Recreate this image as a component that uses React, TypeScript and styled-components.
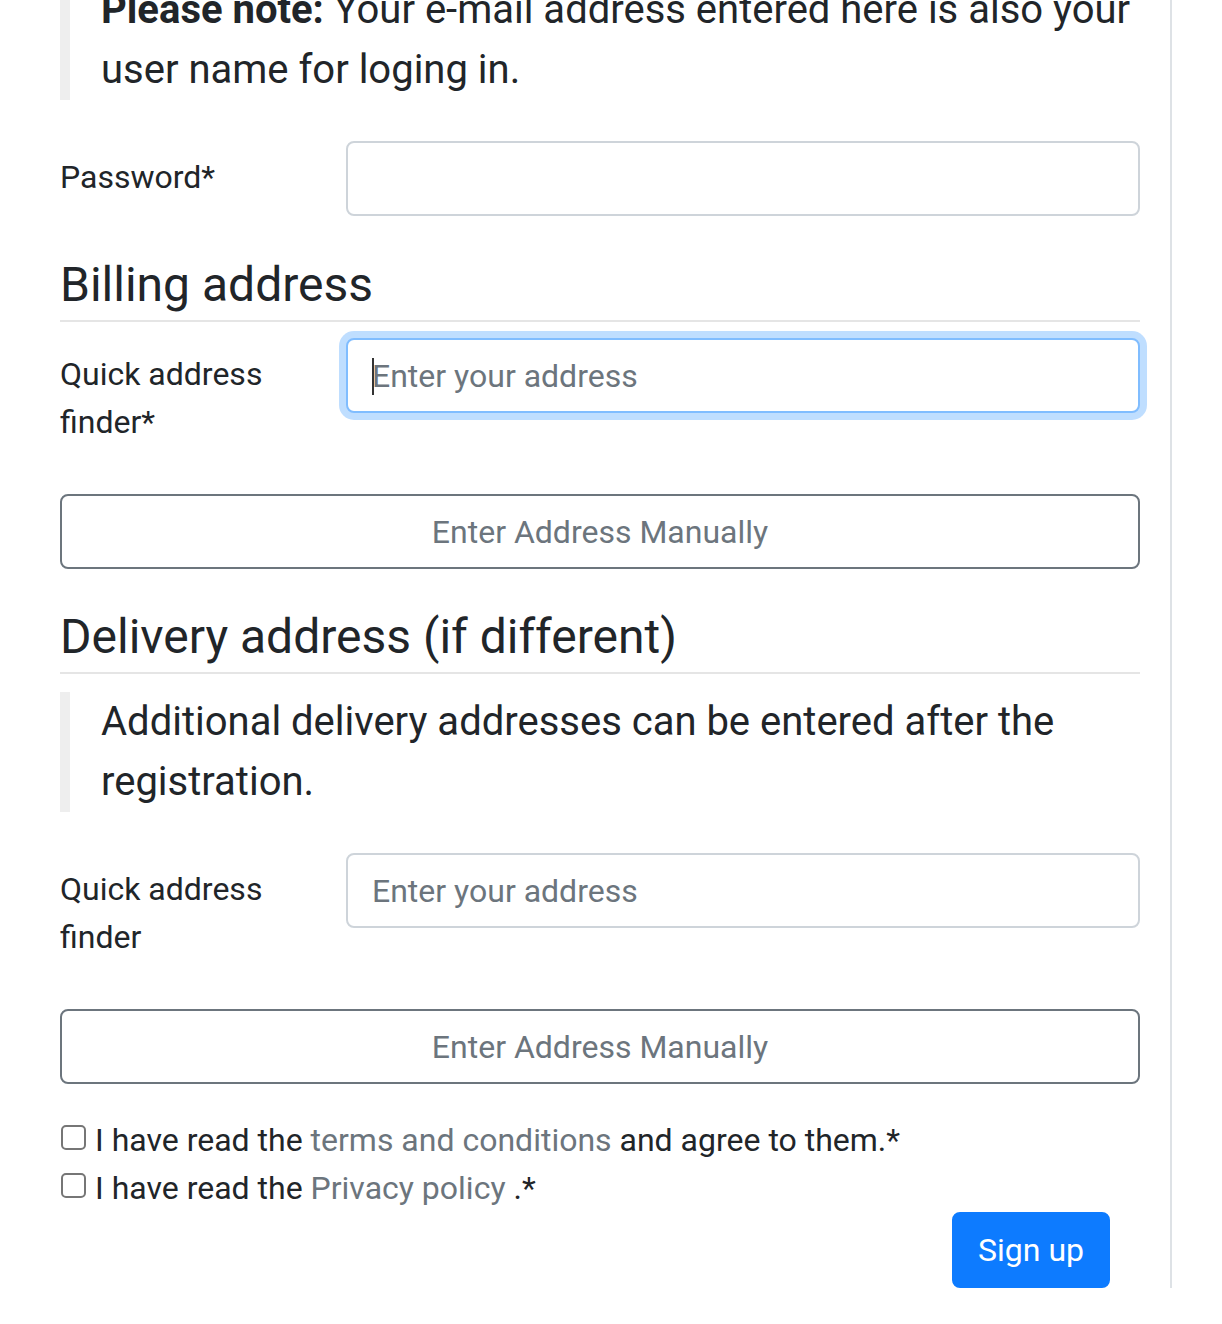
import React from "react";
import styled, { createGlobalStyle, css } from "styled-components";

const Global = createGlobalStyle`
  html, body { margin: 0; padding: 0; background: #fff; }
  body {
    font-family: Roboto, "Liberation Sans", Arial, sans-serif;
    color: #212529;
    font-size: 32px;
    line-height: 48px;
    overflow: hidden;
  }
  * { box-sizing: border-box; }
`;

const Panel = styled.div`
  margin: -20px 0 0 60px;
  width: 1112px;
  padding-right: 30px;
  border-right: 2px solid #dee2e6;
  display: flex;
  flex-direction: column;
`;

const Heading = styled.h4`
  margin: 7px 0 16px 0;
  padding-bottom: 6px;
  border-bottom: 2px solid #e5e5e5;
  font-size: 48px;
  line-height: 58px;
  font-weight: 400;
  color: #212529;
`;

const Note = styled.blockquote`
  margin: 0 0 41px 0;
  padding: 0 0 0 31px;
  border-left: 10px solid #eeeeee;
  font-size: 40px;
  line-height: 60px;
  color: #212529;
  strong { font-weight: 700; }
  ${Heading} + & { margin-top: 2px; }
`;

const Row = styled.div`
  display: grid;
  grid-template-columns: 286px 1fr;
  margin-bottom: 32px;
  align-items: start;
`;

const Label = styled.label`
  padding: 12px 0 16px;
  font-size: 32px;
  line-height: 48px;
  color: #212529;
`;

const Field = styled.div`
  position: relative;
`;

const Input = styled.input<{ $focused?: boolean }>`
  display: block;
  width: 100%;
  height: 75px;
  padding: 0 24px;
  font-family: Roboto, "Liberation Sans", Arial, sans-serif;
  font-size: 32px;
  color: #495057;
  background: #fff;
  border: 2px solid #ced4da;
  border-radius: 8px;
  outline: none;
  &::placeholder { color: #6c757d; opacity: 1; }
  ${(p) =>
    p.$focused &&
    css`
      border-color: #80bdff;
      box-shadow: 0 0 0 7px rgba(0, 123, 255, 0.25);
    `}
`;

const Caret = styled.span`
  position: absolute;
  left: 26px;
  top: 20px;
  width: 2px;
  height: 37px;
  background: #333;
`;

const OutlineButton = styled.button`
  display: block;
  width: 100%;
  height: 75px;
  margin-bottom: 32px;
  font-family: Roboto, "Liberation Sans", Arial, sans-serif;
  font-size: 32px;
  line-height: 48px;
  color: #6c757d;
  background: transparent;
  border: 2px solid #6c757d;
  border-radius: 8px;
  cursor: pointer;
`;

const CheckLine = styled.div`
  font-size: 32px;
  line-height: 48px;
  white-space: nowrap;
`;

const Check = styled.input`
  appearance: none;
  -webkit-appearance: none;
  display: inline-block;
  width: 25px;
  height: 25px;
  margin: 0 9px 0 1px;
  vertical-align: 1px;
  border: 2px solid #767676;
  border-radius: 5px;
  background: #fff;
`;

const Link = styled.a`
  color: #6c757d;
  text-decoration: none;
`;

const Actions = styled.div`
  display: flex;
  justify-content: flex-end;
  padding-right: 30px;
`;

const PrimaryButton = styled.button`
  height: 76px;
  padding: 0 24px;
  font-family: Roboto, "Liberation Sans", Arial, sans-serif;
  font-size: 32px;
  color: #fff;
  background: #0d7bff;
  border: 2px solid #0d7bff;
  border-radius: 8px;
  cursor: pointer;
`;

export default function App() {
  return (
    <>
      <Global />
      <Panel>
        <Note>
          <strong>Please note:</strong> Your e-mail address entered here is also your user name for loging in.
        </Note>

        <Row>
          <Label>Password*</Label>
          <Field>
            <Input type="password" />
          </Field>
        </Row>

        <Heading>Billing address</Heading>
        <Row>
          <Label>
            Quick address
            <br />
            finder*
          </Label>
          <Field>
            <Input $focused placeholder="Enter your address" />
            <Caret />
          </Field>
        </Row>
        <OutlineButton type="button">Enter Address Manually</OutlineButton>

        <Heading>Delivery address (if different)</Heading>
        <Note>Additional delivery addresses can be entered after the registration.</Note>
        <Row>
          <Label>
            Quick address
            <br />
            finder
          </Label>
          <Field>
            <Input placeholder="Enter your address" />
          </Field>
        </Row>
        <OutlineButton type="button">Enter Address Manually</OutlineButton>

        <CheckLine>
          <Check type="checkbox" />I have read the <Link href="#">terms and conditions</Link> and agree to them.*
        </CheckLine>
        <CheckLine>
          <Check type="checkbox" />I have read the <Link href="#">Privacy policy</Link> .*
        </CheckLine>
        <Actions>
          <PrimaryButton type="button">Sign up</PrimaryButton>
        </Actions>
      </Panel>
    </>
  );
}
